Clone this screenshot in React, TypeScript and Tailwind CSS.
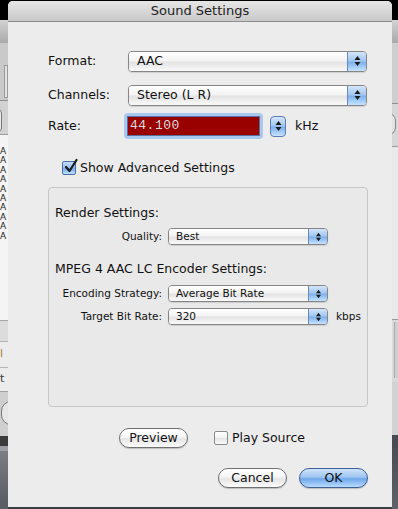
import React from "react";

const font = "font-['Lucida_Grande','DejaVu_Sans',sans-serif]";

function Arrows({ small }: { small?: boolean }) {
  return (
    <svg width="7" height={small ? 10 : 12} viewBox="0 0 7 12" className="block">
      <path d="M3.5 1 L6.5 5 L0.5 5 Z" fill="#1a1a1a" />
      <path d="M3.5 11 L6.5 7 L0.5 7 Z" fill="#1a1a1a" />
    </svg>
  );
}

function Popup({ text, className, small }: { text: string; className: string; small?: boolean }) {
  return (
    <div
      className={
        "flex rounded-[4px] border border-[#858585] overflow-hidden shadow-[0_1px_1px_rgba(0,0,0,0.12)] " +
        className
      }
    >
      <div
        className={
          "flex-1 flex items-center bg-[linear-gradient(#ffffff,#f3f3f3_45%,#e3e3e3_55%,#fafafa)] text-[#111] " +
          (small ? "pl-[7px] text-[10.5px]" : "pl-[8px] text-[12.5px]")
        }
      >
        {text}
      </div>
      <div className="w-[19px] flex items-center justify-center border-l border-[#6a87b8] bg-[linear-gradient(#d3e6fb,#a3c7f0_45%,#7eb2ec_55%,#c6e4ff)]">
        <Arrows small={small} />
      </div>
    </div>
  );
}

function Check({ checked, className }: { checked?: boolean; className: string }) {
  return (
    <div
      className={
        "relative rounded-[2px] border " +
        (checked
          ? "border-[#4b6ea8] bg-[linear-gradient(#c8def8,#90bbee_50%,#76aaea_55%,#bfe1ff)] "
          : "border-[#8a8a8a] bg-[linear-gradient(#ffffff,#f1f1f1_50%,#e4e4e4_55%,#fbfbfb)] ") +
        className
      }
    >
      {checked && (
        <svg width="16" height="16" viewBox="0 0 16 16" className="absolute left-[0px] top-[-4px]">
          <path d="M3 9 L6.5 13 L13.5 2" stroke="#1b1b1b" strokeWidth="2.2" fill="none" strokeLinecap="round" strokeLinejoin="round" />
        </svg>
      )}
    </div>
  );
}

function PushButton({ text, blue, className }: { text: string; blue?: boolean; className: string }) {
  return (
    <div
      className={
        "flex items-center justify-center rounded-full border text-[12.5px] text-[#111] shadow-[0_1px_1px_rgba(0,0,0,0.2)] " +
        (blue
          ? "border-[#3f5f9a] bg-[linear-gradient(#cfe4fb,#9ec5f1_45%,#6ea7ea_55%,#b9dcff)] "
          : "border-[#6f6f6f] bg-[linear-gradient(#ffffff,#f5f5f5_45%,#e5e5e5_55%,#fbfbfb)] ") +
        className
      }
    >
      {text}
    </div>
  );
}

function LeftStrip() {
  return (
    <div className="w-[8px] flex flex-col overflow-hidden">
      <div className="h-[20px] bg-black" />
      <div className="h-[23px] bg-[linear-gradient(#d2d2d2,#a9a9a9)]" />
      <div className="h-[57px] bg-[#c9c9c9] pt-[22px]">
        <div className="ml-[4px] h-[33px] bg-[#e2e2e2] border border-[#9a9a9a]" />
      </div>
      <div className="h-[1px] bg-[#8f8f8f]" />
      <div className="h-[33px] bg-[#d2d2d2] pt-[8px]">
        <div className="ml-[-8px] w-[10px] h-[23px] rounded-[4px] border border-[#7a7a7a] bg-[#e9e9e9]" />
      </div>
      <div className="h-[1px] bg-[#9a9a9a]" />
      <div className="h-[185px] bg-[#f4f4f4] pt-[12px] text-[9px] leading-[9.4px] text-[#222] font-['DejaVu_Sans',sans-serif] whitespace-nowrap">
        <div>A</div>
        <div>A</div>
        <div>A</div>
        <div>A</div>
        <div>A</div>
        <div>A</div>
        <div>A</div>
        <div>A</div>
        <div>A</div>
        <div>A</div>
      </div>
      <div className="h-[1px] bg-[#a5a5a5]" />
      <div className="h-[20px] bg-[#dcdcdc]" />
      <div className="h-[1px] bg-[#b5b5b5]" />
      <div className="h-[25px] bg-[#ececec] flex items-center text-[11px] text-[#a8763a] font-['DejaVu_Sans',sans-serif] whitespace-nowrap">
        <span>l</span>
      </div>
      <div className="h-[1px] bg-[#b5b5b5]" />
      <div className="h-[23px] bg-[#ececec] flex items-center text-[11px] text-[#333] font-['DejaVu_Sans',sans-serif] whitespace-nowrap">
        <span>t</span>
      </div>
      <div className="h-[1px] bg-[#a0a0a0]" />
      <div className="h-[44px] bg-[#cfcfcf] pt-[9px]">
        <div className="ml-[1px] w-[20px] h-[24px] rounded-full border border-[#777] bg-[#e6e6e6]" />
      </div>
      <div className="h-[10px] bg-[#3b3b3b]" />
      <div className="h-[5px] bg-[#9b9ea3]" />
      <div className="flex-1 bg-[linear-gradient(#7a7d82,#575b62)]" />
    </div>
  );
}

function RightStrip() {
  return (
    <div className="w-[6px] flex flex-col overflow-hidden">
      <div className="h-[20px] bg-black" />
      <div className="h-[23px] bg-[linear-gradient(#d2d2d2,#a9a9a9)]" />
      <div className="h-[60px] bg-[#cfcfcf]" />
      <div className="h-[1px] bg-[#8f8f8f]" />
      <div className="h-[42px] bg-[#d6d6d6] pt-[8px]">
        <div className="ml-[-14px] w-[18px] h-[24px] rounded-full border border-[#888] bg-[#e4e4e4]" />
      </div>
      <div className="h-[1px] bg-[#9a9a9a]" />
      <div className="h-[172px] bg-[#e9e9e9]" />
      <div className="h-[1px] bg-[#9a9a9a]" />
      <div className="h-[62px] bg-[#d9d9d9] pt-[2px]">
        <div className="ml-[2px] h-[56px] bg-[#cfcfcf] border-l border-[#aaa]" />
      </div>
      <div className="h-[53px] bg-[#d2d2d2]" />
      <div className="flex-1 bg-[linear-gradient(#474a50,#5e6269)]" />
    </div>
  );
}

export default function App() {
  return (
    <div className={"w-[398px] h-[509px] flex bg-black overflow-hidden " + font}>
      <LeftStrip />
      <div className="w-[384px] flex flex-col">
        <div className="h-[1px] bg-black" />
        <div className="flex-1 flex flex-col bg-[#ececec] rounded-t-[5px] overflow-hidden">
          {/* title bar */}
          <div className="h-[21px] flex items-center justify-center bg-[linear-gradient(#e6e6e6,#c9c9c9)] border-b border-[#8e8e8e] text-[13px] text-[#222]">
            Sound Settings
          </div>

          <div className="flex flex-col pl-[40px]">
            <div className="mt-[28px] flex items-center h-[22px]">
              <div className="w-[80px] text-[12.5px] text-[#111]">Format:</div>
              <Popup text="AAC" className="w-[239px] h-[21px]" />
            </div>
            <div className="mt-[12px] flex items-center h-[22px]">
              <div className="w-[80px] text-[12.5px] text-[#111]">Channels:</div>
              <Popup text="Stereo (L R)" className="w-[239px] h-[21px]" />
            </div>
            <div className="mt-[7px] flex items-center h-[26px]">
              <div className="w-[76px] text-[12.5px] text-[#111]">Rate:</div>
              <div className="w-[139px] h-[26px] rounded-[4px] bg-[#a9c8ee] p-[3px]">
                <div className="h-full border border-[#56719e] bg-[#990000] p-[1px]">
                  <div className="h-full flex items-center pl-[1px] bg-[#990000] text-[13px] text-[#dcdcdc] font-['Liberation_Mono',monospace] tracking-[0.5px]">
                    44.100
                  </div>
                </div>
              </div>
              <div className="ml-[7px] w-[16px] h-[21px] rounded-[4px] border border-[#5c7db4] flex items-center justify-center bg-[linear-gradient(#d3e6fb,#a3c7f0_45%,#7eb2ec_55%,#c6e4ff)]">
                <Arrows />
              </div>
              <div className="ml-[9px] text-[12.5px] text-[#111]">kHz</div>
            </div>

            <div className="mt-[21px] ml-[14px] flex items-center h-[16px]">
              <Check checked className="w-[14px] h-[14px]" />
              <div className="ml-[4px] text-[12.5px] text-[#111]">Show Advanced Settings</div>
            </div>

            {/* group box */}
            <div className="mt-[11px] w-[320px] h-[220px] rounded-[4px] border border-[#c6c6c6] bg-[#e9e9e9] flex flex-col pl-[6px]">
              <div className="mt-[17px] text-[12.5px] text-[#111] leading-[16px]">Render Settings:</div>
              <div className="mt-[7px] flex items-center h-[17px]">
                <div className="w-[113px] pr-[6px] text-right text-[10.5px] text-[#111]">Quality:</div>
                <Popup small text="Best" className="w-[160px] h-[17px]" />
              </div>
              <div className="mt-[16px] text-[12.5px] text-[#111] leading-[16px]">MPEG 4 AAC LC Encoder Settings:</div>
              <div className="mt-[8px] flex items-center h-[17px]">
                <div className="w-[113px] pr-[6px] text-right text-[10.5px] text-[#111] whitespace-nowrap">Encoding Strategy:</div>
                <Popup small text="Average Bit Rate" className="w-[160px] h-[17px]" />
              </div>
              <div className="mt-[6px] flex items-center h-[17px]">
                <div className="w-[113px] pr-[6px] text-right text-[10.5px] text-[#111] whitespace-nowrap">Target Bit Rate:</div>
                <Popup small text="320" className="w-[160px] h-[17px]" />
                <div className="ml-[8px] text-[10.5px] text-[#111]">kbps</div>
              </div>
            </div>

            <div className="mt-[21px] flex items-center h-[20px]">
              <PushButton text="Preview" className="ml-[71px] w-[69px] h-[20px]" />
              <Check className="ml-[26px] w-[14px] h-[14px]" />
              <div className="ml-[4px] text-[12.5px] text-[#111]">Play Source</div>
            </div>

            <div className="mt-[20px] flex items-center h-[20px]">
              <PushButton text="Cancel" className="ml-[170px] w-[69px] h-[20px]" />
              <PushButton text="OK" blue className="ml-[12px] w-[69px] h-[20px]" />
            </div>
          </div>
        </div>
        <div className="h-[2px] bg-[#3a3d42]" />
      </div>
      <RightStrip />
    </div>
  );
}
